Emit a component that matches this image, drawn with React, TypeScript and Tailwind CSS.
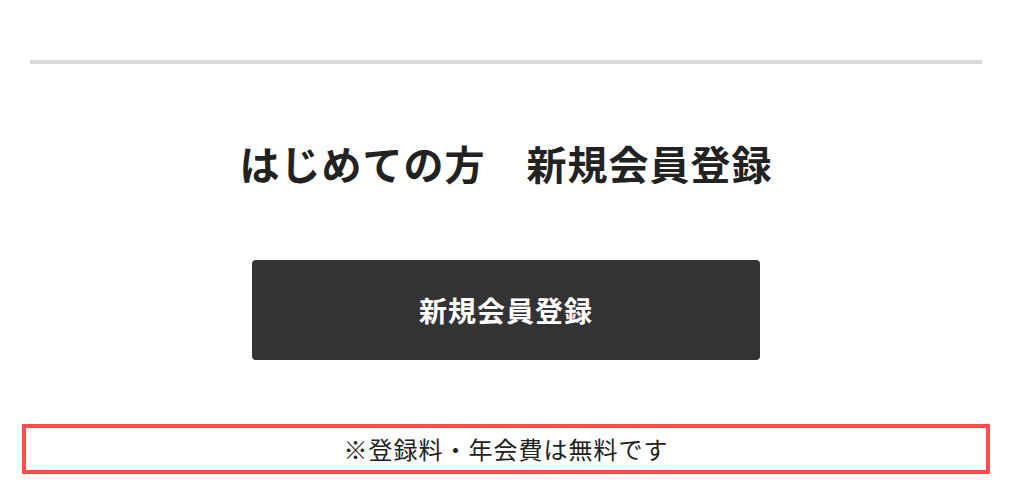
export default function App() {
  return (
    <main
      className="flex w-full flex-col items-center bg-white pt-[60px] pb-[24px] text-[#222]"
      style={{ fontFamily: '"Noto Sans CJK JP", "Noto Sans", sans-serif' }}
    >
      <hr className="h-[4px] w-[952px] border-0 bg-[#d9d9d9]" />

      <h2 className="mt-[69px] text-[40px] font-bold leading-[60px] tracking-[1px] text-[#222]">
        はじめての方　新規会員登録
      </h2>

      <button
        type="button"
        className="mt-[67px] flex h-[100px] w-[508px] items-center justify-center rounded-[4px] bg-[#333] text-[28px] font-bold tracking-[1px] text-white"
      >
        新規会員登録
      </button>

      <div className="mt-[64px] flex h-[50px] w-[968px] items-center justify-center border-[4px] border-[#ff4d4d]">
        <p className="text-[24px] leading-none tracking-[1px] text-[#222]">
          ※登録料・年会費は無料です
        </p>
      </div>
    </main>
  );
}
